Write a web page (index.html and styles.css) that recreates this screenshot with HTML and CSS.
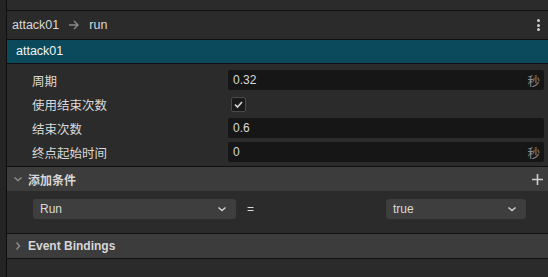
FILE: index.html
```html
<!DOCTYPE html>
<html lang="zh">
<head>
<meta charset="utf-8"/>
<title>Transition Inspector</title>
<link rel="stylesheet" href="styles.css">
</head>
<body>
<div class="side"></div>
<div class="panel">
  <div class="topbar"></div>

  <div class="crumbs">
    <span>attack01</span>
    <svg class="arrow" width="12" height="10" viewBox="0 0 12 10"><path d="M1 5h9M6 1l4 4-4 4" fill="none" stroke="#8a8a8a" stroke-width="1.4"/></svg>
    <span>run</span>
    <div class="kebab"><i></i><i></i><i></i></div>
  </div>

  <div class="title">attack01</div>

  <div class="props">
    <div class="prop">
      <div class="lbl">周期</div>
      <div class="field"><span>0.32</span><span class="unit">秒</span></div>
    </div>
    <div class="prop">
      <div class="lbl">使用结束次数</div>
      <div class="check">
        <svg width="13" height="13" viewBox="0 0 13 13"><path d="M3 6.5l2.5 2.5 4.5-5" fill="none" stroke="#d6d6d6" stroke-width="1.6"/></svg>
      </div>
    </div>
    <div class="prop">
      <div class="lbl">结束次数</div>
      <div class="field"><span>0.6</span></div>
    </div>
    <div class="prop">
      <div class="lbl">终点起始时间</div>
      <div class="field"><span>0</span><span class="unit">秒</span></div>
    </div>
  </div>

  <div class="section">
    <svg class="chev" width="10" height="10" viewBox="0 0 10 10"><path d="M1.5 3.5l3.5 3 3.5-3" fill="none" stroke="#8c8c8c" stroke-width="1.4"/></svg>
    <span class="sec-name">添加条件</span>
    <svg class="plus" width="13" height="13" viewBox="0 0 13 13"><path d="M6.5 1v11M1 6.5h11" stroke="#cfcfcf" stroke-width="1.6"/></svg>
  </div>

  <div class="cond">
    <div class="select wide"><span>Run</span><svg width="10" height="8" viewBox="0 0 10 8"><path d="M1.5 2.5l3.5 3 3.5-3" fill="none" stroke="#cfcfcf" stroke-width="1.5"/></svg></div>
    <div class="eq">=</div>
    <div class="select narrow"><span>true</span><svg width="10" height="8" viewBox="0 0 10 8"><path d="M1.5 2.5l3.5 3 3.5-3" fill="none" stroke="#cfcfcf" stroke-width="1.5"/></svg></div>
  </div>

  <div class="section closed">
    <svg class="chev" width="10" height="10" viewBox="0 0 10 10"><path d="M3.5 1.5l3 3.5-3 3.5" fill="none" stroke="#8c8c8c" stroke-width="1.4"/></svg>
    <span class="sec-name">Event Bindings</span>
  </div>
</div>
</body>
</html>
```

FILE: styles.css
```css
body{margin:0;height:277px;display:flex;background:#232323;color:#d9d9d9;font-family:"Liberation Sans","Noto Sans CJK SC",sans-serif;font-size:12px;overflow:hidden}
.side{width:6px;background:#242424;border-right:1px solid #0e0e0e;flex:none}
.panel{flex:1;background:#2b2b2b;display:flex;flex-direction:column}
.topbar{height:10px;border-bottom:1px solid #101010}
.crumbs{height:28px;display:flex;align-items:center;padding-left:5px;border-bottom:1px solid #101010;font-size:12.5px}
.crumbs .arrow{margin:0 9px 0 9px}
.kebab{margin-left:auto;margin-right:8px;display:flex;flex-direction:column;gap:1.5px}
.kebab i{width:3px;height:3px;border-radius:50%;background:#cfcfcf}
.title{height:23px;line-height:23px;background:#0a4a5c;color:#f2f2f2;padding-left:9px;border-bottom:1px solid #101010;font-size:12.5px}
.props{padding:4px 4px 1px 25px}
.prop{height:24px;display:grid;grid-template-columns:196px 1fr;align-items:center}
.lbl{font-size:12.5px}
.field{height:20px;background:#161616;border-radius:2px;display:flex;align-items:center;padding:0 4px 0 5px}
.field .unit{margin-left:auto;color:#8a8a8a;font-size:12.5px}
.check{width:13px;height:13px;background:#1a1a1a;border:1px solid #4a4a4a;border-radius:2px;margin-left:3px;display:flex}
.section{height:24px;background:#3c3c3c;border-top:1px solid #101010;display:flex;align-items:center;padding-left:6px;margin-top:1px}
.section .chev{margin-right:5px}
.sec-name{font-weight:bold;color:#d6d6d6}
.section .plus{margin-left:auto;margin-right:4px}
.section.closed{border-bottom:1px solid #101010;margin-top:0}
.cond{height:42px;display:flex;align-items:flex-start;padding:8px 0 0 26px;box-sizing:border-box}
.select{height:20px;background:#3e3e3e;border-radius:3px;display:flex;align-items:center;justify-content:space-between;padding:0 9px 0 7px;box-sizing:border-box}
.select.wide{width:203px}
.select.narrow{width:140px;padding-left:7px}
.eq{width:150px;height:20px;line-height:20px;padding-left:11px;box-sizing:border-box}
```
